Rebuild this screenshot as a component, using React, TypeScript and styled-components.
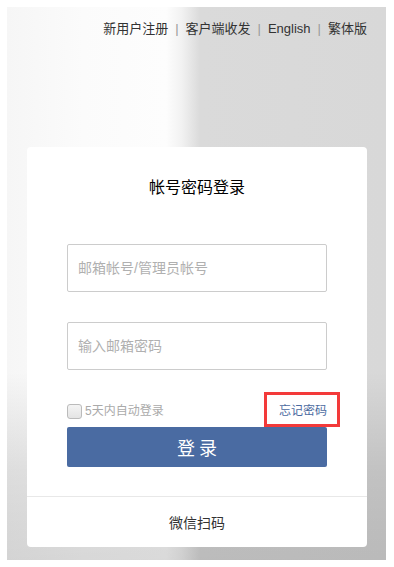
import React from 'react';
import styled, { createGlobalStyle } from 'styled-components';

const GlobalStyle = createGlobalStyle`
  html, body {
    margin: 0;
    padding: 0;
    background: #fff;
  }
  body {
    font-family: "Liberation Sans", "Noto Sans CJK SC", sans-serif;
  }
`;

const Page = styled.div`
  padding: 7px 8px 7px 7px;
`;

const Backdrop = styled.div`
  position: relative;
  height: 553px;
  box-sizing: border-box;
  padding: 12px 19px 0 20px;
  display: flex;
  flex-direction: column;
  background:
    linear-gradient(180deg, rgba(0, 0, 0, 0) 0%, rgba(0, 0, 0, 0) 66%, rgba(0, 0, 0, 0.1) 84%, rgba(0, 0, 0, 0.14) 100%),
    linear-gradient(90deg, #f6f6f6 0%, #fbfbfb 20%, #fdfdfd 42%, #f2f2f2 46%, #dadada 51%, #d8d8d8 100%);
`;

const TopLinks = styled.nav`
  display: flex;
  justify-content: flex-end;
  align-items: center;
  font-size: 13px;
  line-height: 20px;
  color: #333;
`;

const TopLink = styled.a`
  color: #333;
  text-decoration: none;
`;

const Sep = styled.span`
  color: #999;
  margin: 0 7px;
`;

const Card = styled.div`
  margin-top: 108px;
  height: 400px;
  background: #fff;
  border-radius: 4px;
  display: flex;
  flex-direction: column;
`;

const Title = styled.h2`
  margin: 30px 0 0;
  font-size: 16px;
  line-height: 22px;
  font-weight: normal;
  color: #000;
  text-align: center;
`;

const Form = styled.div`
  margin: 45px 40px 0;
  display: flex;
  flex-direction: column;
`;

const Field = styled.input<{ $gap?: number }>`
  height: 48px;
  box-sizing: border-box;
  margin-top: ${(p) => p.$gap ?? 0}px;
  border: 1px solid #ccc;
  border-radius: 2px;
  padding: 0 10px;
  font-family: inherit;
  font-size: 14px;
  color: #333;
  outline: none;
  &::placeholder {
    color: #b0b0b0;
  }
`;

const OptionRow = styled.div`
  height: 57px;
  display: flex;
  align-items: center;
  justify-content: space-between;
  padding-top: 25px;
  box-sizing: border-box;
`;

const Remember = styled.label`
  display: flex;
  align-items: center;
  gap: 3px;
  font-size: 12px;
  line-height: 16px;
  color: #aaa;
`;

const Box = styled.span`
  width: 13px;
  height: 13px;
  border: 1px solid #bbb;
  border-radius: 3px;
  background: linear-gradient(#f4f4f4, #e4e4e4);
`;

const Forgot = styled.a`
  position: relative;
  font-size: 12px;
  line-height: 16px;
  color: #4b6aa0;
  text-decoration: none;
`;

const Highlight = styled.span`
  position: absolute;
  left: -15px;
  right: -13px;
  top: -11px;
  bottom: -8px;
  border: 3px solid #f33a3a;
`;

const Submit = styled.button`
  height: 40px;
  border: none;
  border-radius: 2px;
  background: #4a6ba2;
  color: #fff;
  font-family: inherit;
  font-size: 18px;
  letter-spacing: 4px;
  text-indent: 4px;
  cursor: pointer;
`;

const Footer = styled.div`
  margin-top: auto;
  height: 50px;
  border-top: 1px solid #e8e8e8;
  display: flex;
  align-items: center;
  justify-content: center;
  font-size: 14px;
  color: #333;
`;

const App: React.FC = () => {
  return (
    <Page>
      <GlobalStyle />
      <Backdrop>
        <TopLinks>
          <TopLink href="#">新用户注册</TopLink>
          <Sep>|</Sep>
          <TopLink href="#">客户端收发</TopLink>
          <Sep>|</Sep>
          <TopLink href="#">English</TopLink>
          <Sep>|</Sep>
          <TopLink href="#">繁体版</TopLink>
        </TopLinks>
        <Card>
          <Title>帐号密码登录</Title>
          <Form>
            <Field placeholder="邮箱帐号/管理员帐号" />
            <Field $gap={30} type="password" placeholder="输入邮箱密码" />
            <OptionRow>
              <Remember>
                <Box />
                5天内自动登录
              </Remember>
              <Forgot href="#">
                忘记密码
                <Highlight />
              </Forgot>
            </OptionRow>
            <Submit>登录</Submit>
          </Form>
          <Footer>微信扫码</Footer>
        </Card>
      </Backdrop>
    </Page>
  );
};

export default App;
